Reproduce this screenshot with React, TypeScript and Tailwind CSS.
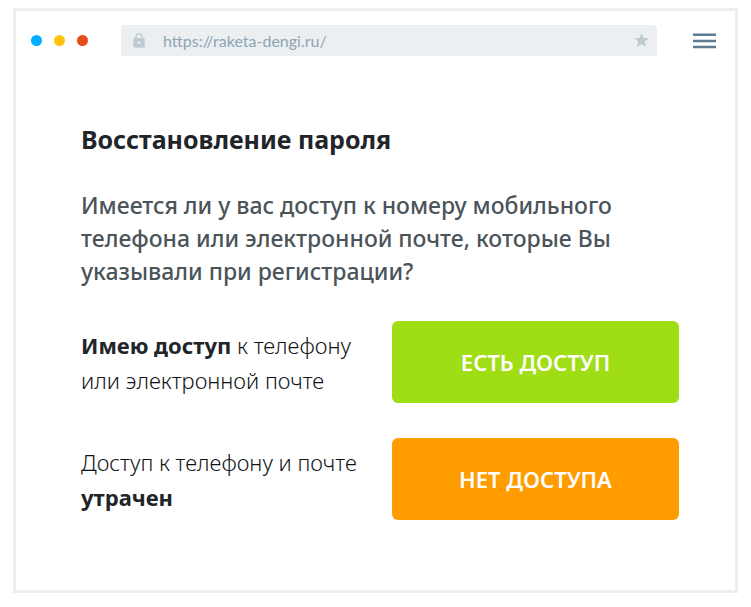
import React from 'react';

function LockIcon() {
  return (
    <svg className="h-[15px] w-3 shrink-0" viewBox="0 0 12 15" aria-hidden="true">
      <path d="M2.9 6V4a3.1 3.1 0 0 1 6.2 0v2" fill="none" stroke="#bccad1" strokeWidth="1.4" />
      <rect x="0.3" y="5.2" width="11.4" height="9.3" rx="1.2" fill="#bccad1" />
      <path d="M4.4 9.7h3.2M6 8.1v3.2" stroke="#ebeff2" strokeWidth="1.3" />
    </svg>
  );
}

function StarIcon() {
  return (
    <svg className="size-[15px]" viewBox="0 0 15 15" aria-hidden="true">
      <path
        d="M7.5 0 9.4 5 14.7 5.2 10.6 8.6 12 14 7.5 11 3 14 4.4 8.6 0.3 5.2 5.6 5Z"
        fill="#bccad1"
      />
    </svg>
  );
}

function MenuIcon() {
  return (
    <svg className="h-4 w-[23px]" viewBox="0 0 23 16" aria-hidden="true">
      <path d="M0 1.8h23M0 7.9h23M0 13.9h23" stroke="#607b8f" strokeWidth="2.5" />
    </svg>
  );
}

function BrowserBar() {
  return (
    <header className="flex items-center pt-[14px] pr-[19px] pl-[15px]">
      <div className="flex gap-3">
        <span className="size-[11px] rounded-full bg-[#00aeff]" />
        <span className="size-[11px] rounded-full bg-[#ffc20e]" />
        <span className="size-[11px] rounded-full bg-[#e64c18]" />
      </div>
      <div className="ml-[33px] flex h-[31px] min-w-0 flex-1 items-center rounded-[3px] bg-[#ebeff2] pr-2 pl-3">
        <LockIcon />
        <input
          type="text"
          aria-label="URL"
          defaultValue="https://raketa-dengi.ru/"
          className="ml-[18px] min-w-0 flex-1 bg-transparent font-['Lato',sans-serif] text-base text-[#8fa5b2] outline-none"
        />
        <button type="button" aria-label="Bookmark">
          <StarIcon />
        </button>
      </div>
      <button type="button" aria-label="Menu" className="ml-9">
        <MenuIcon />
      </button>
    </header>
  );
}

export default function App() {
  return (
    <div className="bg-white px-[13px] pt-2 pb-[14px] font-['Noto_Sans','Open_Sans',sans-serif] text-[#212529]">
      <div className="border-3 border-[#ebeff2] pb-[70px]">
        <BrowserBar />
        <main className="pt-[65px] pr-14 pl-[65px]">
          <h1 className="text-[25px] leading-9 font-bold">Восстановление пароля</h1>
          <p className="mt-8 text-[23px] leading-[33px] font-medium text-[#4b5459]">
            Имеется ли у вас доступ к номеру мобильного телефона или электронной почте, которые Вы
            указывали при регистрации?
          </p>
          <div className="mt-[33px] grid grid-cols-[1fr_287px] items-center gap-x-6 gap-y-[35px] text-[22px] leading-[35px]">
            <p className="pt-[2px] font-light text-[#0f1316]">
              <b className="font-bold text-[#212529]">Имею доступ</b> к телефону или электронной почте
            </p>
            <button type="button" className="h-[82px] rounded-md bg-[#9fdd14] font-semibold text-white">
              ЕСТЬ ДОСТУП
            </button>
            <p className="pt-[2px] font-light text-[#0f1316]">
              Доступ к телефону и почте <b className="font-bold text-[#212529]">утрачен</b>
            </p>
            <button type="button" className="h-[82px] rounded-md bg-[#ff9c00] font-semibold text-white">
              НЕТ ДОСТУПА
            </button>
          </div>
        </main>
      </div>
    </div>
  );
}
